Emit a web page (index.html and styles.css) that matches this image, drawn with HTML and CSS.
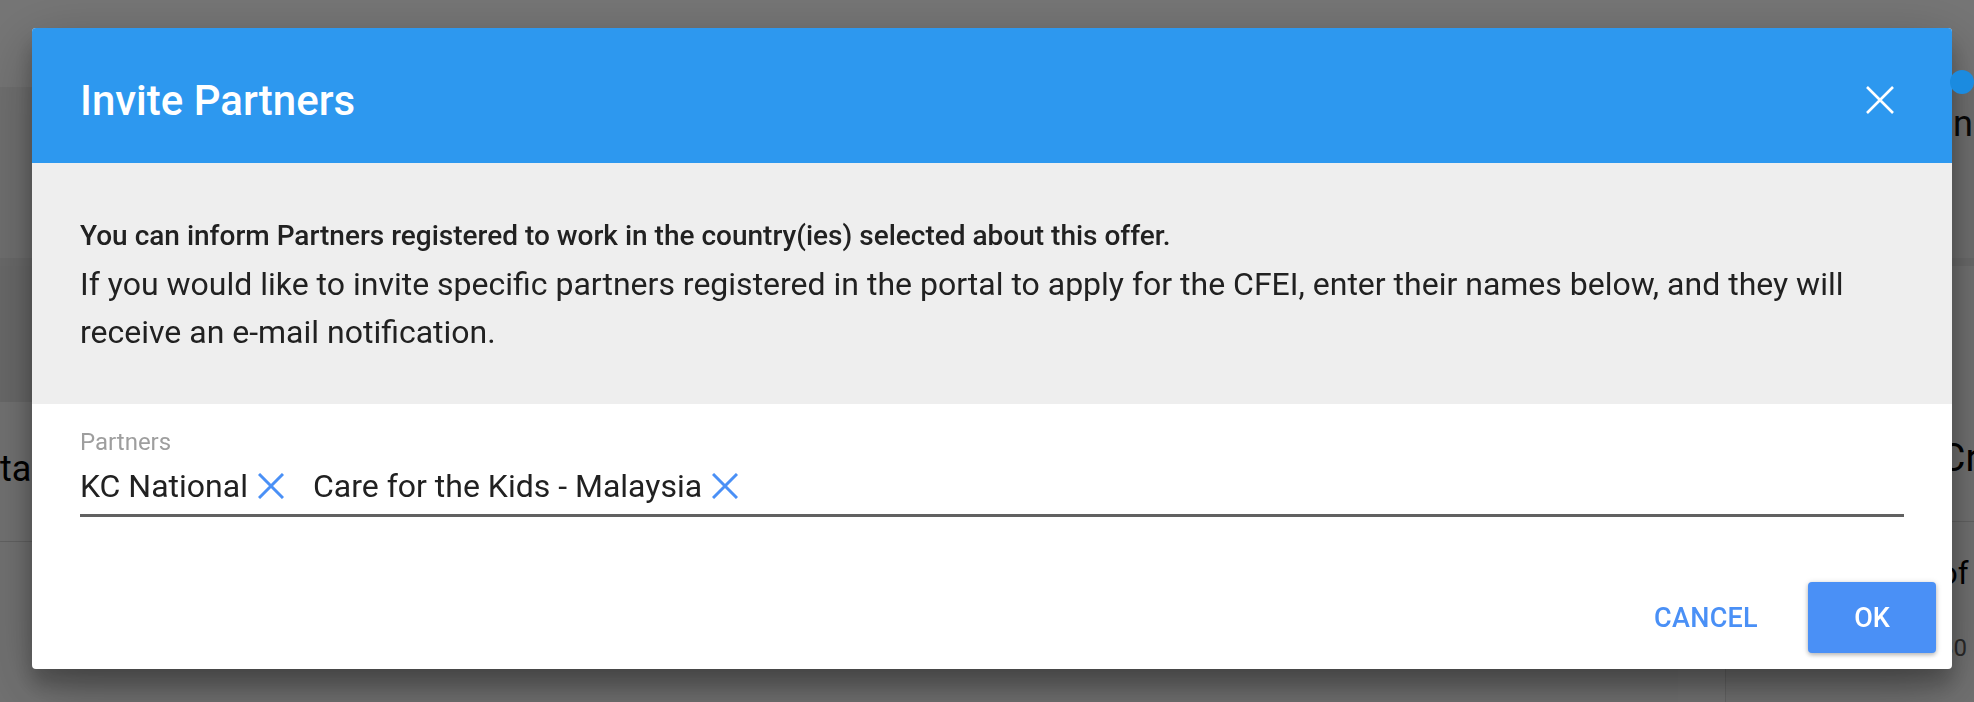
FILE: index.html
```html
<!DOCTYPE html>
<html lang="en">
<head>
<meta charset="utf-8">
<title>Invite Partners</title>
<link rel="stylesheet" href="styles.css">
</head>
<body>
<div class="page">
  <header class="appbar"><span class="avatar-dot"></span></header>
  <div class="subbar"><span class="subbar-text">Publication</span></div>
  <div class="main">
    <div class="left-col">
      <div class="banner"></div>
      <section class="card">
        <div class="card-head"><h2 class="card-title">tails of project</h2></div>
      </section>
    </div>
    <aside class="side">
      <div class="side-head"><h3 class="side-title">Cr</h3></div>
      <div class="side-body">
        <p class="side-text">of</p>
        <p class="side-meta">80</p>
      </div>
    </aside>
  </div>
</div>

<div class="overlay"></div>

<div class="dialog" role="dialog" aria-labelledby="dlg-title">
  <div class="dialog-header">
    <h1 class="dialog-title" id="dlg-title">Invite Partners</h1>
    <button class="close-btn" type="button" aria-label="Close">
      <svg width="28" height="28" viewBox="0 0 28 28"><path d="M1 1L27 27M27 1L1 27" stroke="#ffffff" stroke-width="2.6" fill="none"/></svg>
    </button>
  </div>
  <div class="dialog-info">
    <p class="info-strong">You can inform Partners registered to work in the country(ies) selected about this offer.</p>
    <p class="info-text">If you would like to invite specific partners registered in the portal to apply for the CFEI, enter their names below, and they will receive an e-mail notification.</p>
  </div>
  <div class="field">
    <label class="field-label">Partners</label>
    <div class="chips">
      <span class="chip">KC National<svg class="chip-x" width="26" height="26" viewBox="0 0 26 26"><path d="M1 1L25 25M25 1L1 25" stroke="#4a90f6" stroke-width="3" fill="none"/></svg></span>
      <span class="chip">Care for the Kids - Malaysia<svg class="chip-x" width="26" height="26" viewBox="0 0 26 26"><path d="M1 1L25 25M25 1L1 25" stroke="#4a90f6" stroke-width="3" fill="none"/></svg></span>
    </div>
  </div>
  <div class="dialog-actions">
    <button class="btn-flat" type="button">CANCEL</button>
    <button class="btn-raised" type="button">OK</button>
  </div>
</div>
</body>
</html>
```

FILE: styles.css
```css
* { box-sizing: border-box; }

html, body {
  margin: 0;
  padding: 0;
  height: 100%;
  overflow: hidden;
}

body {
  font-family: Roboto, "Liberation Sans", Arial, sans-serif;
  background: #fafafa;
  color: #212121;
}

/* ---------- background page ---------- */
.page {
  display: flex;
  flex-direction: column;
  min-height: 100%;
}

.appbar {
  height: 87px;
  background: #ffffff;
  display: flex;
  justify-content: flex-end;
  align-items: flex-end;
}

.avatar-dot {
  width: 24px;
  height: 24px;
  border-radius: 50%;
  background: #1b8be0;
  margin-bottom: -7px;
  position: relative;
  z-index: 1;
}

.subbar {
  height: 179px;
  background: #f2f2f2;
  border-bottom: 8px solid #e6e6e6;
  display: flex;
  justify-content: flex-end;
  padding: 16px 1px 0 0;
}

.subbar-text {
  font-size: 36px;
  line-height: 43px;
  color: #111;
}

.main {
  flex: 1;
  display: grid;
  grid-template-columns: 1678px 1fr;
  gap: 47px;
}

.left-col {
  display: flex;
  flex-direction: column;
}

.banner {
  height: 136px;
  background: #e4e4e4;
}

.card {
  flex: 1;
  background: #f7f7f7;
}

.card-head {
  height: 140px;
  border-bottom: 1px solid #d6d6d6;
  padding-top: 46px;
}

.card-title {
  margin: 0;
  font-size: 36px;
  font-weight: 400;
  line-height: 43px;
  color: #000;
}

.side {
  background: #f5f5f5;
  border-left: 1px solid #dcdcdc;
  padding-left: 214px;
}

.side-head {
  height: 256px;
  border-bottom: 1px solid #d6d6d6;
  padding-top: 169px;
}

.side-title {
  margin: 0;
  font-size: 39px;
  font-weight: 400;
  line-height: 47px;
  color: #000;
}

.side-body {
  padding-top: 32px;
}

.side-text {
  margin: 0;
  font-size: 31px;
  line-height: 40px;
  color: #000;
}

.side-meta {
  margin: 40px 0 0;
  font-size: 24px;
  line-height: 28px;
  color: #5a5a5a;
}

.overlay {
  position: fixed;
  inset: 0;
  background: rgba(0, 0, 0, 0.54);
}

/* ---------- dialog ---------- */
.dialog {
  position: fixed;
  left: 32px;
  top: 28px;
  width: 1920px;
  background: #ffffff;
  border-radius: 4px;
  overflow: hidden;
  box-shadow: 0 19px 60px rgba(0, 0, 0, 0.3), 0 15px 20px rgba(0, 0, 0, 0.22);
}

.dialog-header {
  height: 135px;
  background: #2d98ef;
  display: flex;
  align-items: center;
  padding: 9px 58px 0 48px;
}

.dialog-title {
  margin: 0;
  font-size: 42px;
  font-weight: 500;
  line-height: normal;
  color: #ffffff;
}

.close-btn {
  margin-left: auto;
  border: 0;
  padding: 0;
  background: transparent;
  width: 28px;
  height: 28px;
  display: flex;
}

.dialog-info {
  background: #eeeeee;
  padding: 49px 48px 48px;
}

.info-strong {
  margin: 0;
  font-size: 28px;
  font-weight: 500;
  line-height: 48px;
  color: #212121;
}

.info-text {
  margin: 0;
  font-size: 32px;
  font-weight: 400;
  line-height: 48px;
  color: #212121;
}

.field {
  margin: 0 48px 49px;
  padding: 24px 0 8px;
  border-bottom: 3px solid #616161;
}

.field-label {
  display: block;
  font-size: 24px;
  line-height: 28px;
  color: #9e9e9e;
}

.chips {
  margin-top: 10px;
  height: 40px;
  display: flex;
  align-items: center;
  gap: 29px;
}

.chip {
  display: inline-flex;
  align-items: center;
  font-size: 32px;
  line-height: 40px;
  color: #212121;
  gap: 10px;
}

.chip-x {
  flex: none;
}

.dialog-actions {
  display: flex;
  justify-content: flex-end;
  align-items: center;
  padding: 16px;
}

.btn-flat,
.btn-raised {
  font-family: Roboto, "Liberation Sans", Arial, sans-serif;
  font-size: 27px;
  font-weight: 500;
  height: 71px;
  border: 0;
  border-radius: 4px;
  cursor: pointer;
}

.btn-flat {
  background: transparent;
  color: #4a90f6;
  padding: 0 25px;
  margin-right: 25px;
  letter-spacing: 0.3px;
}

.btn-raised {
  width: 128px;
  background: #4a90f6;
  color: #ffffff;
  box-shadow: 0 1px 6px rgba(0, 0, 0, 0.16), 0 2px 4px rgba(0, 0, 0, 0.2);
}
```
